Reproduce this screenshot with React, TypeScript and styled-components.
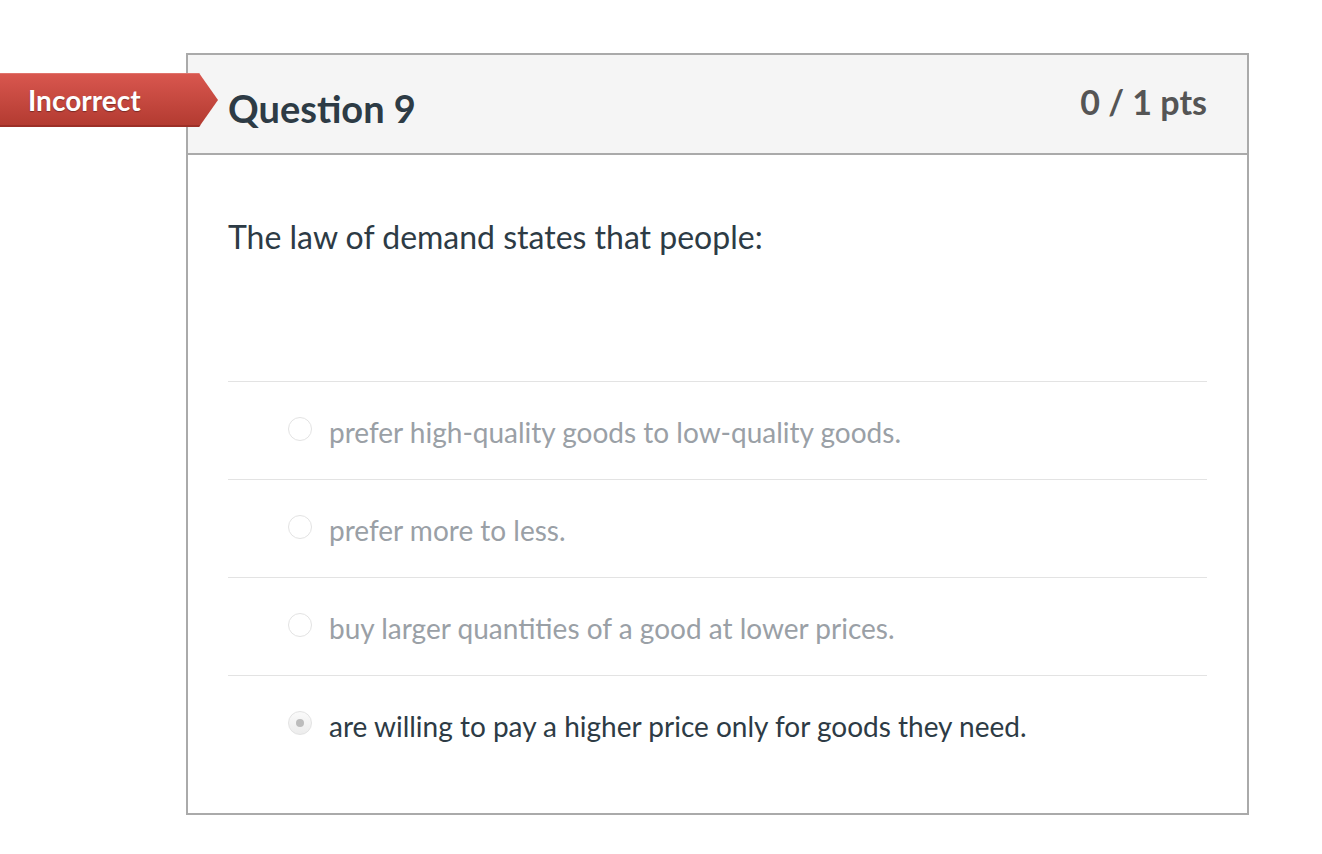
import { createGlobalStyle, styled } from 'styled-components'

const GlobalStyle = createGlobalStyle`
  body {
    margin: 0;
    background: #fff;
    font-family: Lato, "Open Sans", sans-serif;
  }
`;

const Page = styled.div`
  padding: 53px 0 0 186px;
`;

const Card = styled.div`
  position: relative;
  width: 1059px;
  border: 2px solid #aaaaaa;
  background: #fff;
`;

// red "Incorrect" ribbon hanging off the left edge of the card
const Banner = styled.div`
  position: absolute;
  left: -188px;
  top: 18px;
  width: 218px;
  height: 54px;
  display: flex;
  align-items: center;
  padding-left: 28px;
  box-sizing: border-box;
  color: #fff;
  font-size: 28px;
  font-weight: 700;
  text-shadow: 0 1px 1px rgba(0, 0, 0, 0.35);
  background: linear-gradient(#d9574f, #b23a30);
  box-shadow: inset 0 1px 0 #e0736b, inset 0 -2px 0 #9c2f27;
  clip-path: polygon(0 0, 199px 0, 218px 50%, 199px 100%, 0 100%);
`;

const Header = styled.div`
  height: 98px;
  background: #f5f5f5;
  border-bottom: 2px solid #aaaaaa;
  display: flex;
  justify-content: space-between;
  align-items: flex-start;
  padding: 0 40px;
`;

const Title = styled.h2`
  margin: 30px 0 0;
  font-size: 38px;
  line-height: 46px;
  font-weight: 700;
  color: #2d3b45;
`;

const Points = styled.div`
  margin-top: 26px;
  font-size: 34px;
  line-height: 42px;
  font-weight: 700;
  color: #555;
`;

const Body = styled.div`
  padding: 64px 40px 40px;
`;

const Prompt = styled.p`
  margin: 0 0 126px;
  font-size: 32px;
  line-height: 36px;
  color: #2d3b45;
`;

const Answer = styled.div<{ $chosen?: boolean }>`
  height: 97px;
  border-top: 1px solid #e3e3e3;
  display: flex;
  align-items: center;
  padding: 3px 0 0 60px;
  box-sizing: border-box;
  height: 98px;
  font-size: 28px;
  color: ${p => (p.$chosen ? '#2d3b45' : '#9aa0a6')};
`;

const Radio = styled.span<{ $chosen?: boolean }>`
  width: 24px;
  height: 24px;
  border-radius: 50%;
  border: 1px solid #e3e3e3;
  box-sizing: border-box;
  margin-right: 17px;
  margin-top: -6px;
  display: flex;
  align-items: center;
  justify-content: center;
  background: ${p => (p.$chosen ? 'linear-gradient(#fafafa, #ececec)' : '#fff')};
  &::after {
    content: '';
    width: 8px;
    height: 8px;
    border-radius: 50%;
    background: #bcbcbc;
    display: ${p => (p.$chosen ? 'block' : 'none')};
  }
`;

const answers = [
  'prefer high-quality goods to low-quality goods.',
  'prefer more to less.',
  'buy larger quantities of a good at lower prices.',
  'are willing to pay a higher price only for goods they need.',
];

export default function App() {
  return (
    <Page>
      <GlobalStyle />
      <Card>
        <Banner>Incorrect</Banner>
        <Header>
          <Title>Question 9</Title>
          <Points>0 / 1 pts</Points>
        </Header>
        <Body>
          <Prompt>The law of demand states that people:</Prompt>
          {answers.map((a, i) => (
            <Answer key={a} $chosen={i === 3}>
              <Radio $chosen={i === 3} />
              {a}
            </Answer>
          ))}
        </Body>
      </Card>
    </Page>
  );
}
